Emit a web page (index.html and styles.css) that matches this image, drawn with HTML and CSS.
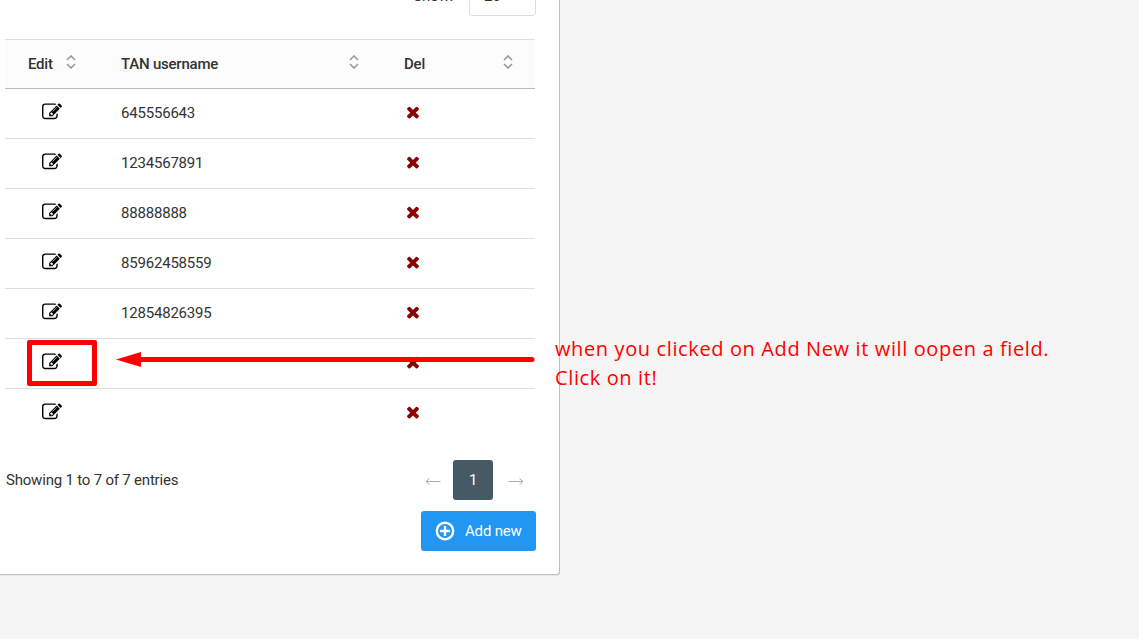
FILE: index.html
```html
<!DOCTYPE html>
<html lang="en">
<head>
    <meta charset="UTF-8">
    <meta name="viewport" content="width=device-width, initial-scale=1.0">
    <title>TAN usernames</title>
    <link rel="stylesheet" href="styles.css">
</head>
<body>
    <div class="card">
        <div class="toolbar">
            <span class="show-label">Show:</span>
            <div class="length-select">20</div>
        </div>

        <table class="tan-table">
            <thead>
                <tr>
                    <th class="col-edit"><div class="head">Edit <svg class="sort" viewBox="0 0 10 14"><path d="M1 5l4-4 4 4M1 9l4 4 4-4"/></svg></div></th>
                    <th class="col-name"><div class="head">TAN username <svg class="sort" viewBox="0 0 10 14"><path d="M1 5l4-4 4 4M1 9l4 4 4-4"/></svg></div></th>
                    <th class="col-del"><div class="head">Del <svg class="sort" viewBox="0 0 10 14"><path d="M1 5l4-4 4 4M1 9l4 4 4-4"/></svg></div></th>
                </tr>
            </thead>
            <tbody id="tanTableBody"></tbody>
        </table>

        <div class="table-footer">
            <span>Showing 1 to 7 of 7 entries</span>
            <div class="pager">
                <svg class="arrow" viewBox="0 0 16 8"><path d="M15.500 4.500H1M4.500 1.500L1 4.500l3.500 3"/></svg>
                <span class="page active">1</span>
                <svg class="arrow next" viewBox="0 0 16 8"><path d="M.5 4.500H15M11.500 1.500L15 4.500l-3.500 3"/></svg>
            </div>
        </div>

        <div class="actions">
            <button class="btn-add">
                <svg class="plus" viewBox="0 0 20 20"><circle cx="10" cy="10" r="8.200"/><path d="M10 5v10M5 10h10"/></svg>
                Add new
            </button>
        </div>
    </div>

    <!-- help notes over the table -->
    <div class="note-box"></div>
    <svg class="note-arrow" viewBox="0 0 420 16">
        <path d="M22 8.500H416" stroke="#ff0000" stroke-width="5" stroke-linecap="round"/>
        <path d="M0 8.500L25 1v15z" fill="#ff0000"/>
    </svg>
    <div class="note-text">
        <div>when you clicked on Add New it will oopen a field.</div>
        <div>Click on it!</div>
    </div>

    <!-- icons used in the rows -->
    <svg class="hidden">
        <symbol id="icon-edit" viewBox="0 0 1792 1792">
            <path d="M888 1184l116-116-152-152-116 116v56h96v96h56zm440-720q-16-16-33 1l-350 350q-17 17-1 33t33-1l350-350q17-17 1-33zm80 594v190q0 119-84.500 203.500t-203.500 84.500h-832q-119 0-203.500-84.500t-84.500-203.500v-832q0-119 84.500-203.500t203.500-84.500h832q63 0 117 25 15 7 18 23 3 17-9 29l-49 49q-14 14-32 8-23-6-45-6h-832q-66 0-113 47t-47 113v832q0 66 47 113t113 47h832q66 0 113-47t47-113v-126q0-13 9-22l64-64q15-15 35-7t20 29zm-96-738l288 288-672 672h-288v-288zm444 132l-92 92-288-288 92-92q28-28 68-28t68 28l152 152q28 28 28 68t-28 68z"/>
        </symbol>
        <symbol id="icon-del" viewBox="0 0 1792 1792">
            <path d="M1490 1322q0 40-28 68l-136 136q-28 28-68 28t-68-28l-294-294-294 294q-28 28-68 28t-68-28l-136-136q-28-28-28-68t28-68l294-294-294-294q-28-28-28-68t28-68l136-136q28-28 68-28t68 28l294 294 294-294q28-28 68-28t68 28l136 136q28 28 28 68t-28 68l-294 294 294 294q28 28 28 68z"/>
        </symbol>
    </svg>

    <script>
        const usernames = ['645556643', '1234567891', '88888888', '85962458559', '12854826395', '', ''];
        const tableBody = document.getElementById('tanTableBody');

        usernames.forEach(name => {
            const row = document.createElement('tr');
            row.innerHTML = `
                <td class="cell-edit"><svg class="icon-edit"><use href="#icon-edit"/></svg></td>
                <td>${name}</td>
                <td class="cell-del"><svg class="icon-del"><use href="#icon-del"/></svg></td>
            `;
            tableBody.appendChild(row);
        });
    </script>
</body>
</html>
```
FILE: styles.css
```css
body {
    margin: 0;
    height: 639px;
    overflow: hidden;
    background-color: #f5f5f5;
    font-family: Roboto, sans-serif;
    font-size: 15px;
    letter-spacing: -0.2px;
    color: #333;
}

svg {
    display: block;
    fill: none;
}

.hidden {
    display: none;
}

.card {
    box-sizing: border-box;
    width: 560px;
    height: 575px;
    padding: 0 23px 0 5px;
    overflow: hidden;
    background-color: #fff;
    border-right: 1px solid #bfbfbf;
    border-bottom: 1px solid #bfbfbf;
    border-bottom-right-radius: 3px;
    box-shadow: 0 1px 1px rgba(0, 0, 0, 0.05);
}

.toolbar {
    display: flex;
    justify-content: flex-end;
    align-items: center;
    height: 40px;
    margin-top: -24px;
    margin-bottom: 23px;
}

.show-label {
    margin-right: 16px;
}

.length-select {
    box-sizing: border-box;
    width: 67px;
    height: 40px;
    padding-left: 14px;
    line-height: 38px;
    border: 1px solid #ddd;
    border-radius: 3px;
}

.tan-table {
    width: 530px;
    table-layout: fixed;
    border-spacing: 0;
    border-top: 1px solid #ddd;
}

.tan-table th, .tan-table td {
    box-sizing: border-box;
    padding: 0 22px 0 23px;
    text-align: left;
}

.tan-table th {
    height: 49px;
    background-color: #fcfcfc;
    border-bottom: 1px solid #bbb;
    font-weight: 500;
    letter-spacing: -0.22px;
}

.tan-table td {
    height: 50px;
    padding-bottom: 2px;
    border-bottom: 1px solid #ddd;
}

.tan-table tr:last-child td {
    border-bottom-color: transparent;
}

.col-edit {
    width: 93px;
}

.col-name {
    width: 283px;
}

.head {
    display: flex;
    justify-content: space-between;
    align-items: center;
}

.sort {
    width: 10px;
    height: 14px;
    margin-bottom: 4px;
    stroke: #999;
    stroke-width: 1.6;
}

.tan-table .cell-edit {
    padding-left: 37px;
    padding-bottom: 3px;
}

.icon-edit {
    width: 20px;
    height: 20px;
    fill: #000;
}

.tan-table .cell-del {
    padding-left: 23px;
    padding-bottom: 3px;
}

.icon-del {
    width: 18px;
    height: 18px;
    fill: #8b0000;
}

.table-footer {
    display: flex;
    justify-content: space-between;
    align-items: center;
    height: 40px;
    margin-top: 21px;
    padding-left: 1px;
}

.pager {
    display: flex;
    align-items: center;
    gap: 12px;
    margin-right: 12px;
}

.arrow {
    width: 16px;
    height: 8px;
    margin-top: 2px;
    stroke: #aaa;
}

.arrow.next {
    margin-left: 3px;
}

.page.active {
    width: 40px;
    height: 40px;
    line-height: 40px;
    text-align: center;
    background-color: #455a64;
    border-radius: 3px;
    color: #fff;
}

.actions {
    display: flex;
    justify-content: flex-end;
    margin-top: 11px;
}

.btn-add {
    display: flex;
    align-items: center;
    gap: 10px;
    width: 115px;
    height: 40px;
    padding: 0 0 0 14px;
    background-color: #2196f3;
    border: none;
    border-radius: 3px;
    color: #fff;
    font-family: inherit;
    font-size: 15px;
    letter-spacing: -0.18px;
    white-space: nowrap;
}

.plus {
    width: 20px;
    height: 20px;
    stroke: #fff;
    stroke-width: 2.4;
}

.note-box {
    position: absolute;
    left: 27px;
    top: 340px;
    width: 60px;
    height: 36px;
    border: 5px solid #ff0000;
    border-radius: 2px;
}

.note-arrow {
    position: absolute;
    left: 116px;
    top: 351px;
    width: 420px;
    height: 16px;
}

.note-text {
    position: absolute;
    left: 555px;
    top: 334px;
    font-family: "Open Sans", sans-serif;
    font-size: 20px;
    line-height: 29px;
    letter-spacing: 0.62px;
    color: #ff0000;
    white-space: nowrap;
}
```
